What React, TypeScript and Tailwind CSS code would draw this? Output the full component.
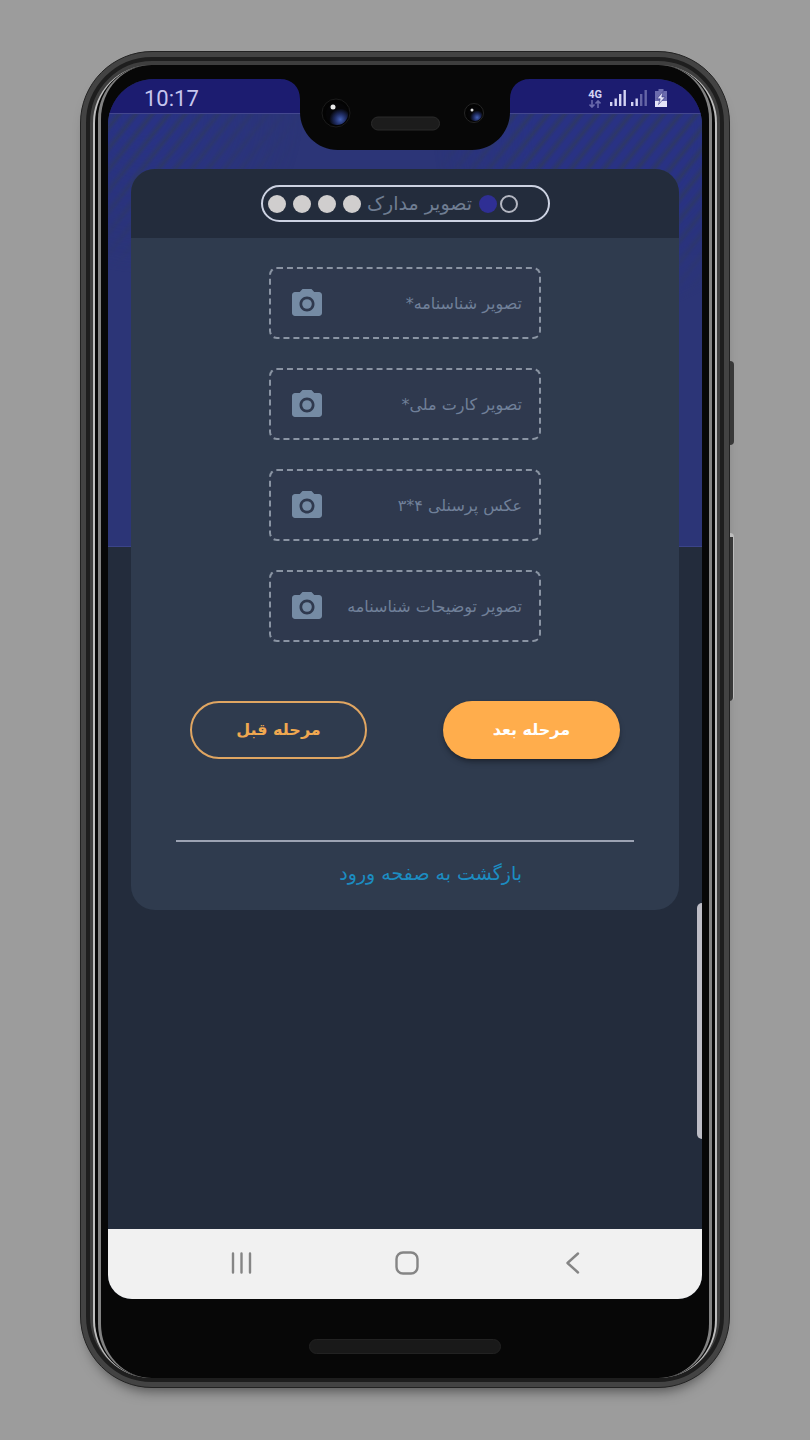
import { MdPhotoCamera } from 'react-icons/md';

const documents = [
  { id: 'birth-certificate', label: 'تصویر شناسنامه*' },
  { id: 'national-card', label: 'تصویر کارت ملی*' },
  { id: 'personal-photo', label: 'عکس پرسنلی ۴*۳' },
  { id: 'certificate-notes', label: 'تصویر توضیحات شناسنامه' },
];

function StatusBar() {
  return (
    <div className="flex h-[35px] items-center justify-between border-b border-[#44488f] bg-[#1c1c70] pr-[35px] pl-9 pt-1">
      <time className="font-['Roboto',sans-serif] text-[22px] text-[#c6c6ee]">10:17</time>
      <div className="flex items-center gap-2 font-['Roboto',sans-serif] text-[#d4d4f4]">
        <div className="flex flex-col items-center">
          <span className="text-[11px] leading-[11px] font-bold">4G</span>
          <svg className="h-2 w-3" viewBox="0 0 12 8" fill="none" stroke="#6a6aac" strokeWidth="1.6">
            <path d="M3 0v7M.5 4.500 3 7l2.500-2.500M9 8V1M6.500 3.500 9 1l2.500 2.500" />
          </svg>
        </div>
        <svg className="h-[18px] w-4" viewBox="0 0 16 18" fill="currentColor">
          <path d="M0 13h2.400v4H0zM4.500 9.500h2.400V17H4.500zM9 5h2.400v12H9zM13.500 1h2.400v16h-2.400z" />
        </svg>
        <svg className="-ml-[3px] h-[18px] w-4" viewBox="0 0 16 18" fill="currentColor">
          <path d="M0 13h2.400v4H0zM4.500 9.500h2.400V17H4.500z" />
          <path d="M9 5h2.400v12H9zM13.500 1h2.400v16h-2.400z" opacity=".4" />
        </svg>
        <svg className="h-[18px] w-3" viewBox="0 0 12 18">
          <path d="M3.500 0h5v2H12v16H0V2h3.500z" fill="#6c6cae" />
          <path d="M0 12h12v6H0z" fill="#e4e4f8" />
          <path d="M8 2.500 2 9.800h3.200L3.500 15.500 10.200 8H6.800z" fill="#e4e4f8" stroke="#1c1c70" strokeWidth=".5" />
        </svg>
      </div>
    </div>
  );
}

function Notch() {
  return (
    <svg
      className="absolute top-0 left-1/2 h-[71px] w-[250px] -translate-x-1/2"
      viewBox="0 0 250 71"
      aria-hidden="true"
    >
      <defs>
        <radialGradient id="lens" cx=".65" cy=".75" r=".5">
          <stop offset="0" stopColor="#4460b4" />
          <stop offset=".5" stopColor="#1f2c62" />
          <stop offset="1" stopColor="#050507" />
        </radialGradient>
      </defs>
      <path d="M0 0C12 0 20 8 20 20V33C20 54 37 71 58 71H192C213 71 230 54 230 33V20C230 8 238 0 250 0Z" fill="#070707" />
      <circle cx="56" cy="34" r="14" fill="#030303" stroke="#1b1b1b" />
      <circle cx="57" cy="35" r="11" fill="url(#lens)" />
      <circle cx="53" cy="28" r="2.500" fill="#e9e9e9" />
      <rect x="91.500" y="38" width="68" height="13" rx="6.500" fill="#1c1c1c" stroke="#2b2b2b" />
      <circle cx="194" cy="34" r="9.500" fill="#030303" stroke="#242424" />
      <circle cx="195" cy="35" r="7" fill="url(#lens)" />
      <circle cx="192" cy="31" r="1.500" fill="#dcdcdc" />
    </svg>
  );
}

function Steps() {
  return (
    <div className="flex h-[37px] w-[289px] items-center rounded-full border-2 border-[#ccd2e2] pl-[5px]">
      <div className="flex gap-[7px]">
        <span className="size-[18px] rounded-full bg-[#d0cece]" />
        <span className="size-[18px] rounded-full bg-[#d0cece]" />
        <span className="size-[18px] rounded-full bg-[#d0cece]" />
        <span className="size-[18px] rounded-full bg-[#d0cece]" />
      </div>
      <h1 dir="rtl" className="w-[118px] text-center text-[19px] whitespace-nowrap text-[#6f7d92]">
        تصویر مدارک
      </h1>
      <div className="flex gap-[3px]">
        <span className="size-[18px] rounded-full bg-[#2f2f94]" />
        <span className="size-[18px] rounded-full border-2 border-[#b4b7c2]" />
      </div>
    </div>
  );
}

function UploadField({ id, label }: { id: string; label: string }) {
  return (
    <label
      htmlFor={id}
      className="flex h-[72px] cursor-pointer items-center justify-between rounded-lg border-2 border-dashed border-[#8a94a3] bg-[#2f394e] pt-[2px] pr-[17px] pl-[18px]"
    >
      <MdPhotoCamera className="size-9 shrink-0 text-[#758ba4]" />
      <span dir="rtl" className="text-base whitespace-nowrap text-[#708099]">
        {label}
      </span>
      <input id={id} type="file" accept="image/*" className="sr-only" />
    </label>
  );
}

function RegisterCard() {
  return (
    <section className="relative mx-[23px] mt-[55px] overflow-hidden rounded-3xl bg-[#2f3b4e]">
      <header className="flex h-[69px] items-center justify-center bg-[#232c3c]">
        <Steps />
      </header>
      <form className="pt-[29px] pb-[21px]">
        <div className="mx-auto flex w-[272px] flex-col gap-[29px]">
          {documents.map((doc) => (
            <UploadField key={doc.id} id={doc.id} label={doc.label} />
          ))}
        </div>
        <div className="mt-[59px] flex justify-between px-[59px] text-base font-bold">
          <button
            type="button"
            dir="rtl"
            className="h-[58px] w-[177px] rounded-full border-2 border-[#e0a662] text-[#f0a850]"
          >
            مرحله قبل
          </button>
          <button
            type="button"
            dir="rtl"
            className="h-[58px] w-[177px] rounded-full bg-[#ffad4c] text-white shadow-md shadow-black/30"
          >
            مرحله بعد
          </button>
        </div>
        <hr className="mx-[45px] mt-[81px] border-t-2 border-[#9ca3b3]" />
        <div dir="rtl" className="mx-auto mt-[17px] w-[272px] px-[19px] leading-7">
          <a href="#login" className="text-[19px] whitespace-nowrap text-[#1c8dc2]">
            بازگشت به صفحه ورود
          </a>
        </div>
      </form>
    </section>
  );
}

function NavBar() {
  return (
    <nav className="grid h-[70px] grid-cols-3 items-center bg-[#f1f1f1] pr-12 pb-[2px] pl-13 text-[#858585]">
      <button type="button" aria-label="Recent apps" className="flex justify-center">
        <svg className="size-6" viewBox="0 0 24 24" stroke="currentColor" strokeWidth="2.400" strokeLinecap="round">
          <path d="M3 2.500v19M11.500 2.500v19M20 2.500v19" />
        </svg>
      </button>
      <button type="button" aria-label="Home" className="flex justify-center">
        <svg className="size-6" viewBox="0 0 24 24" fill="none" stroke="currentColor" strokeWidth="2.400">
          <rect x="1.500" y="1.500" width="21" height="21" rx="6.500" />
        </svg>
      </button>
      <button type="button" aria-label="Back" className="flex justify-center">
        <svg
          className="size-6"
          viewBox="0 0 24 24"
          fill="none"
          stroke="currentColor"
          strokeWidth="2.400"
          strokeLinecap="round"
          strokeLinejoin="round"
        >
          <path d="M18 2.500 7.500 12 18 21.500" />
        </svg>
      </button>
    </nav>
  );
}

function Screen() {
  return (
    <div className="relative flex flex-1 flex-col overflow-hidden rounded-t-[46px] rounded-b-3xl bg-[#232c3c]">
      <StatusBar />
      <main className="relative flex-1">
        <div className="absolute inset-x-0 top-0 h-[433px] border-b border-[#3b4489] bg-[#2c3577]">
          {/* faint diagonal stripes in the two upper corners */}
          <div className="h-full bg-[repeating-linear-gradient(128deg,#28328a_0px,#28328a_4px,#2f3a62_9px,#28328a_13px)] opacity-70 mask-[radial-gradient(circle_at_6%_0%,black_20px,transparent_160px),radial-gradient(circle_at_85%_5%,black_80px,transparent_180px)]" />
        </div>
        <RegisterCard />
        <div className="absolute top-[789px] right-0 h-[236px] w-[5px] rounded-l-md bg-[#bdbdc6]" />
      </main>
      <NavBar />
      <Notch />
    </div>
  );
}

export default function App() {
  return (
    <div className="flex min-h-screen flex-col bg-[#9c9c9c] px-20 pt-[51px] pb-[52px] font-['DejaVu_Sans',sans-serif]">
      {/* each wrapper is one ring of the phone's metal edge */}
      <div className="relative flex flex-1 flex-col rounded-[72px] border border-[#222222] bg-[#434343] p-[5px] shadow-[0_10px_14px_-8px_rgba(0,0,0,0.55)]">
        <div className="absolute top-[309px] -right-[5px] h-[84px] w-1 rounded-r-sm bg-[#383838]" />
        <div className="absolute top-[481px] -right-[5px] h-[168px] w-1 rounded-r-sm border-t-4 border-r border-[#bcbcbc] bg-[#383838]" />
        <div className="flex flex-1 flex-col rounded-[66px] border-4 border-[#1e1e1e] bg-[#3e3e3e] px-[3px] pt-[4px]">
          <div className="flex flex-1 flex-col rounded-[58px] border-x-2 border-[#bdbdbd] bg-[#070707] px-[3px]">
            <div className="flex flex-1 flex-col rounded-[54px] border-x-3 border-[#828282] bg-[#070707] px-[7px] pt-[14px]">
              <Screen />
              <div className="flex h-[79px] justify-center pt-10">
                <div className="h-[15px] w-48 rounded-full border border-[#222222] bg-[#191919]" />
              </div>
            </div>
          </div>
        </div>
      </div>
    </div>
  );
}
